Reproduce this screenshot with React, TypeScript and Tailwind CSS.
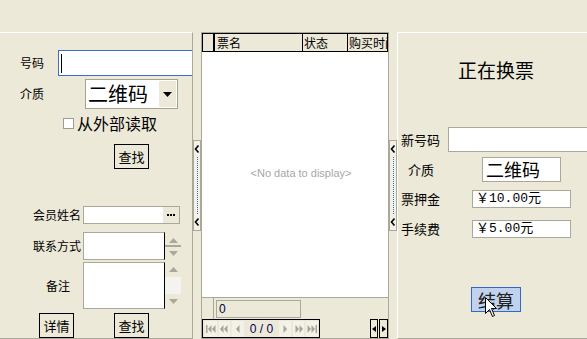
import React from "react";

type NavKind = "first" | "prevPage" | "prev" | "next" | "nextPage" | "last";

function Chevron() {
  return (
    <svg width="6" height="8" viewBox="0 0 6 8">
      <path d="M4.5 0.5 L1.5 4 L4.5 7.5" fill="none" stroke="black" strokeWidth="1.6" />
    </svg>
  );
}

function Splitter() {
  return (
    <div className="w-[8px] shrink-0 pt-[108px]">
      <div className="h-[91px] border border-[#ACA899] bg-[#F4F2E8] flex flex-col items-center py-[4px]">
        <Chevron />
        <div className="flex-1 my-[4px] border-l border-dotted border-[#316AC5]" />
        <Chevron />
      </div>
    </div>
  );
}

function NavIcon({ kind }: { kind: NavKind }) {
  const c = "#A8A496";
  return (
    <svg width="10" height="8" viewBox="0 0 10 8">
      {kind === "first" && (
        <>
          <rect x="0" y="0" width="1.5" height="8" fill={c} />
          <polygon points="5.5,0 2,4 5.5,8" fill={c} />
          <polygon points="9.5,0 6,4 9.5,8" fill={c} />
        </>
      )}
      {kind === "prevPage" && (
        <>
          <polygon points="4.5,0 1,4 4.5,8" fill={c} />
          <polygon points="8.5,0 5,4 8.5,8" fill={c} />
        </>
      )}
      {kind === "prev" && <polygon points="6.5,0 3,4 6.5,8" fill={c} />}
      {kind === "next" && <polygon points="3.5,0 7,4 3.5,8" fill={c} />}
      {kind === "nextPage" && (
        <>
          <polygon points="1.5,0 5,4 1.5,8" fill={c} />
          <polygon points="5.5,0 9,4 5.5,8" fill={c} />
        </>
      )}
      {kind === "last" && (
        <>
          <polygon points="0.5,0 4,4 0.5,8" fill={c} />
          <polygon points="4.5,0 8,4 4.5,8" fill={c} />
          <rect x="8.5" y="0" width="1.5" height="8" fill={c} />
        </>
      )}
    </svg>
  );
}

function NavButton({ kind }: { kind: NavKind }) {
  return (
    <div className="w-[13px] h-[16px] mx-[1px] bg-[#F3F1E8] flex items-center justify-center">
      <NavIcon kind={kind} />
    </div>
  );
}

function TriUp() {
  return (
    <svg width="9" height="5" viewBox="0 0 9 5">
      <polygon points="0,5 4.5,0 9,5" fill="#ACA899" />
    </svg>
  );
}

function TriDown() {
  return (
    <svg width="9" height="5" viewBox="0 0 9 5">
      <polygon points="0,0 4.5,5 9,0" fill="#ACA899" />
    </svg>
  );
}

function LeftPanel() {
  return (
    <div className="w-[193px] h-[307px] shrink-0 border-t border-t-white border-r border-r-[#ACA899] border-b border-b-[#ACA899] overflow-hidden flex flex-col">
      <div className="flex items-center h-[26px] mt-[17px] shrink-0">
        <span className="ml-[20px] w-[38px] shrink-0">号码</span>
        <div className="w-[150px] h-[26px] shrink-0 border border-[#3C6FCB] bg-white flex items-center">
          <span className="ml-[2px] w-[1px] h-[19px] bg-black" />
        </div>
      </div>

      <div className="flex items-center h-[30px] mt-[3px] shrink-0">
        <span className="ml-[20px] w-[65px] shrink-0">介质</span>
        <div className="w-[93px] h-[30px] shrink-0 border border-[#A5A291] bg-white flex">
          <span className="flex-1 pl-[2px] text-[20px] leading-[27px]">二维码</span>
          <span className="w-[17px] my-[1px] mr-[1px] bg-[#ECE9D8] flex items-center justify-center">
            <svg width="9" height="5" viewBox="0 0 9 5">
              <polygon points="0,0 4.5,5 9,0" fill="black" />
            </svg>
          </span>
        </div>
      </div>

      <div className="flex items-center h-[18px] mt-[5px] shrink-0">
        <span className="ml-[63px] w-[11px] h-[11px] border border-[#9C9C9C] bg-white shrink-0" />
        <span className="ml-[3px] text-[16px] leading-none">从外部读取</span>
      </div>

      <div className="flex h-[25px] mt-[12px] shrink-0">
        <div className="ml-[114px] w-[35px] h-[25px] border border-black flex items-center justify-center text-[13px]">
          查找
        </div>
      </div>

      <div className="flex items-center h-[18px] mt-[37px] shrink-0">
        <span className="ml-[33px] w-[50px] shrink-0">会员姓名</span>
        <div className="w-[97px] h-[18px] shrink-0 border border-[#ACA899] bg-white flex justify-end">
          <span className="w-[16px] bg-[#ECE9D8] flex items-center justify-center gap-[1px]">
            <span className="w-[2px] h-[2px] bg-black" />
            <span className="w-[2px] h-[2px] bg-black" />
            <span className="w-[2px] h-[2px] bg-black" />
          </span>
        </div>
      </div>

      <div className="flex items-center h-[28px] mt-[8px] shrink-0">
        <span className="ml-[33px] w-[50px] shrink-0">联系方式</span>
        <div className="w-[82px] h-[28px] shrink-0 border border-[#ACA899] border-r-black bg-white" />
        <div className="w-[16px] h-[28px] flex flex-col items-center">
          <div className="h-[13px] flex items-end pb-[2px]">
            <TriUp />
          </div>
          <div className="w-full h-[2px] bg-[#ACA899]" />
          <div className="h-[13px] flex items-start pt-[4px]">
            <TriDown />
          </div>
        </div>
      </div>

      <div className="flex items-center h-[47px] mt-[2px] shrink-0">
        <span className="ml-[33px] w-[50px] shrink-0 text-center">备注</span>
        <div className="w-[82px] h-[47px] shrink-0 border border-[#ACA899] border-r-black bg-white" />
        <div className="w-[16px] h-[47px] flex flex-col items-center">
          <div className="h-[15px] flex items-center">
            <TriUp />
          </div>
          <div className="w-full h-[17px] bg-[#F4F3EE] bg-[radial-gradient(#DEDCD2_0.6px,transparent_0.7px)] bg-[length:2px_2px]" />
          <div className="h-[15px] flex items-center">
            <TriDown />
          </div>
        </div>
      </div>

      <div className="flex h-[25px] mt-[4px] shrink-0">
        <div className="ml-[39px] w-[35px] h-[25px] border border-black flex items-center justify-center text-[13px]">
          详情
        </div>
        <div className="ml-[40px] w-[35px] h-[25px] border border-black flex items-center justify-center text-[13px]">
          查找
        </div>
      </div>
    </div>
  );
}

function Grid() {
  return (
    <div className="w-[188px] h-[307px] shrink-0 border border-[#ACA899] flex flex-col overflow-hidden">
      <div className="flex h-[19px] shrink-0 border border-black bg-[#ECE9D8] leading-[17px] whitespace-nowrap">
        <div className="w-[12px] shrink-0 border-r-2 border-black" />
        <div className="w-[88px] shrink-0 border-r border-black pl-[2px]">票名</div>
        <div className="w-[45px] shrink-0 border-r border-black pl-[1px]">状态</div>
        <div className="flex-1 overflow-hidden pl-[1px]">购买时间</div>
      </div>
      <div className="flex-1 bg-white flex items-center justify-center pl-[12px] pb-[2px]">
        <span className="font-['Liberation_Sans',sans-serif] text-[11px] text-[#A7A7A7]">&lt;No data to display&gt;</span>
      </div>
      <div className="h-[22px] shrink-0 border-t border-[#ACA899] flex">
        <div className="w-[12px] shrink-0 border-r border-[#ACA899]" />
        <div className="ml-[2px] mt-[2px] w-[85px] h-[18px] border border-[#ACA899] pl-[2px] leading-[16px] font-['Liberation_Sans',sans-serif] text-[12px] text-[#000040]">
          0
        </div>
      </div>
      <div className="h-[19px] shrink-0 flex">
        <div className="w-[118px] h-[19px] border border-black flex items-center pl-[1px]">
          <NavButton kind="first" />
          <NavButton kind="prevPage" />
          <NavButton kind="prev" />
          <span className="w-[38px] text-center font-['Liberation_Sans',sans-serif] text-[12px] text-[#000060]">0 / 0</span>
          <NavButton kind="next" />
          <NavButton kind="nextPage" />
          <NavButton kind="last" />
        </div>
        <div className="flex-1" />
        <div className="w-[8px] h-[19px] border border-black flex items-center justify-center">
          <svg width="4" height="6" viewBox="0 0 4 6">
            <polygon points="4,0 0,3 4,6" fill="black" />
          </svg>
        </div>
        <div className="w-[9px] h-[19px] ml-[1px] border border-black flex items-center justify-center">
          <svg width="4" height="6" viewBox="0 0 4 6">
            <polygon points="0,0 4,3 0,6" fill="black" />
          </svg>
        </div>
      </div>
    </div>
  );
}

function Cursor() {
  return (
    <svg width="13" height="21" viewBox="0 0 13 21" className="absolute left-[13px] top-[9px]">
      <path
        d="M0.5 0.5 L0.5 16.5 L4.5 12.5 L7.5 19.5 L9.5 18.5 L6.5 11.5 L11.5 11.5 Z"
        fill="white"
        stroke="black"
        strokeWidth="1"
      />
    </svg>
  );
}

function RightPanel() {
  return (
    <div className="w-[200px] h-[307px] shrink-0 border-t border-t-white border-l border-l-white border-b border-b-[#ACA899] flex flex-col text-[13px]">
      <div className="h-[26px] mt-[24px] shrink-0 pl-[6px] text-center text-[19px] leading-[26px] mr-[9px]">正在换票</div>

      <div className="flex items-center h-[25px] mt-[44px] shrink-0">
        <span className="ml-[3px] w-[47px] shrink-0">新号码</span>
        <div className="w-[150px] h-[25px] shrink-0 border border-[#ACA899] bg-white" />
      </div>

      <div className="flex items-center h-[25px] mt-[5px] shrink-0">
        <span className="ml-[10px] w-[74px] shrink-0">介质</span>
        <div className="w-[79px] h-[25px] shrink-0 border border-[#ACA899] bg-white pl-[3px] text-[18px] leading-[22px]">
          二维码
        </div>
      </div>

      <div className="flex items-center h-[18px] mt-[8px] shrink-0">
        <span className="ml-[3px] w-[71px] shrink-0">票押金</span>
        <div className="w-[99px] h-[18px] shrink-0 border border-[#ACA899] bg-white pl-[3px] leading-[16px] font-['Liberation_Mono','Noto_Sans_CJK_SC',monospace]">
          ￥10.00元
        </div>
      </div>

      <div className="flex items-center h-[18px] mt-[12px] shrink-0">
        <span className="ml-[3px] w-[71px] shrink-0">手续费</span>
        <div className="w-[99px] h-[18px] shrink-0 border border-[#ACA899] bg-white pl-[3px] leading-[16px] font-['Liberation_Mono','Noto_Sans_CJK_SC',monospace]">
          ￥5.00元
        </div>
      </div>

      <div className="flex h-[25px] mt-[49px] shrink-0">
        <div className="relative ml-[73px] w-[50px] h-[25px] border border-[#316AC5] bg-[#C1D2EE] flex items-center justify-center text-[18px] leading-none text-[#202020]">
          结算
          <Cursor />
        </div>
      </div>
    </div>
  );
}

export default function App() {
  return (
    <div className="w-[587px] h-[339px] overflow-hidden bg-[#ECE9D8] pt-[32px] flex font-['Noto_Sans_CJK_SC',sans-serif] text-[12px] leading-normal text-black">
      <LeftPanel />
      <Splitter />
      <Grid />
      <Splitter />
      <RightPanel />
    </div>
  );
}
